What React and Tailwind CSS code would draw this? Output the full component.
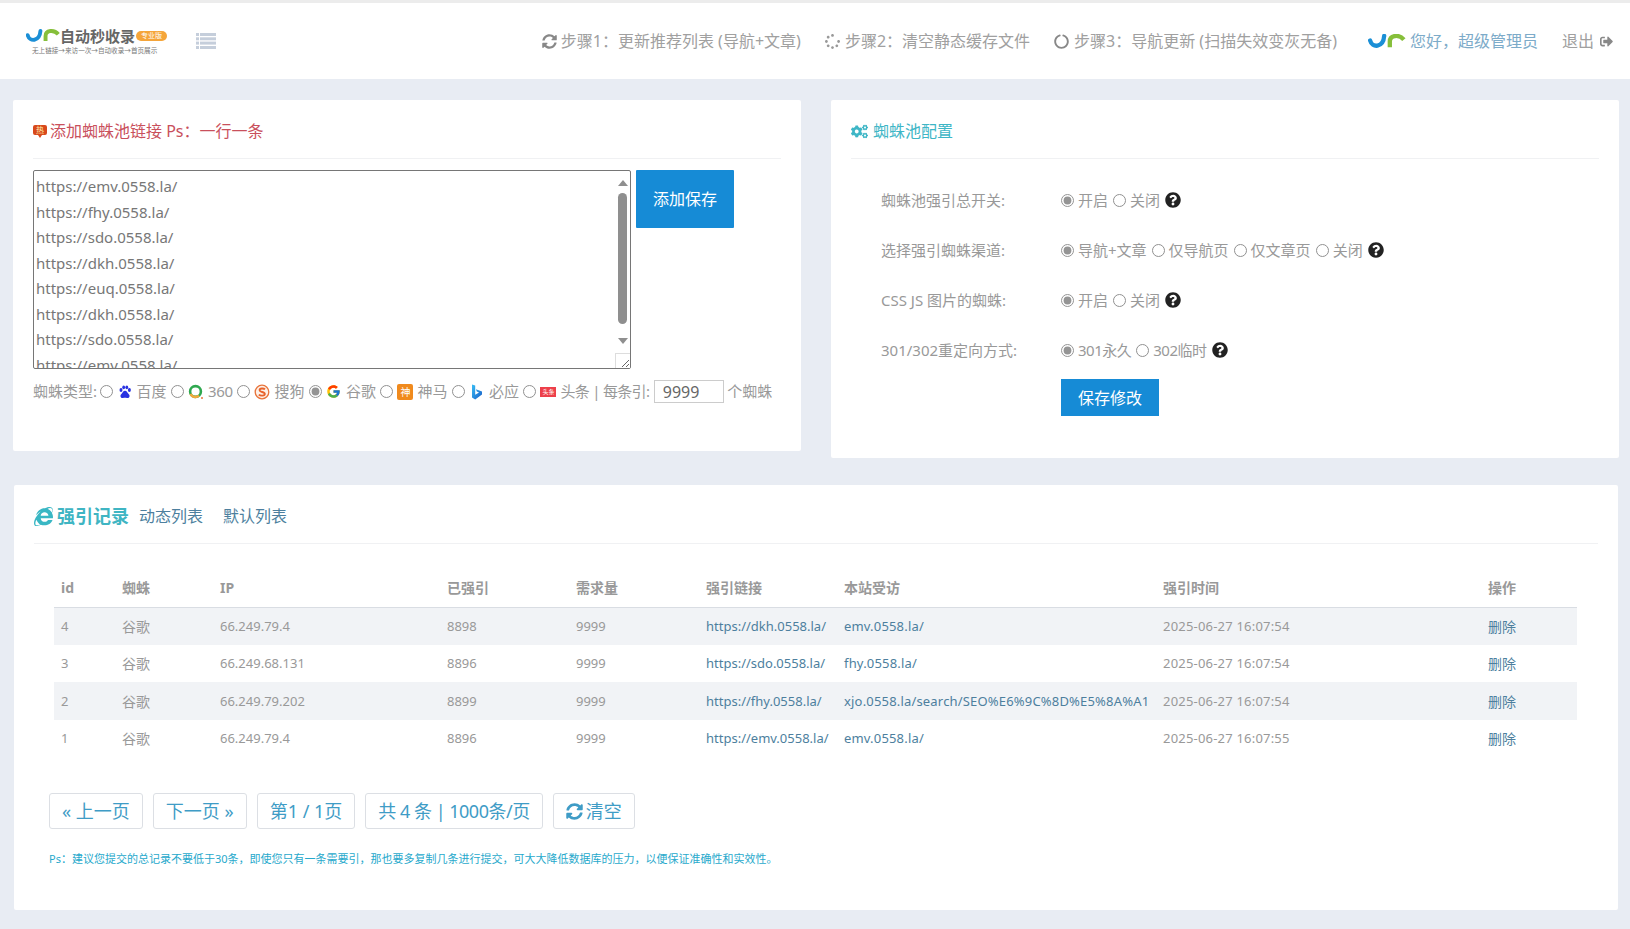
import {
  FaSyncAlt,
  FaSpinner,
  FaCircleNotch,
  FaSignOutAlt,
  FaQuestionCircle,
  FaCogs,
  FaInternetExplorer,
} from "react-icons/fa";
import { FcGoogle } from "react-icons/fc";

const LINKS = [
  "https://emv.0558.la/",
  "https://fhy.0558.la/",
  "https://sdo.0558.la/",
  "https://dkh.0558.la/",
  "https://euq.0558.la/",
  "https://dkh.0558.la/",
  "https://sdo.0558.la/",
  "https://emv.0558.la/",
];

const ROWS = [
  ["4", "66.249.79.4", "8898", "https://dkh.0558.la/", "emv.0558.la/", "2025-06-27 16:07:54"],
  ["3", "66.249.68.131", "8896", "https://sdo.0558.la/", "fhy.0558.la/", "2025-06-27 16:07:54"],
  ["2", "66.249.79.202", "8899", "https://fhy.0558.la/", "xjo.0558.la/search/SEO%E6%9C%8D%E5%8A%A1", "2025-06-27 16:07:54"],
  ["1", "66.249.79.4", "8896", "https://emv.0558.la/", "emv.0558.la/", "2025-06-27 16:07:55"],
];

const HEADS = ["id", "蜘蛛", "IP", "已强引", "需求量", "强引链接", "本站受访", "强引时间", "操作"];

const Logo = ({ className }) => (
  <svg viewBox="0 0 40 16" className={className}>
    <path d="M2 7 C4 15 16 15 17 2" fill="none" stroke="#1b8fd6" strokeWidth="4.6" strokeLinecap="round" />
    <path d="M23 14 V8 C23 1 33 0 38 6" fill="none" stroke="#86bf3a" strokeWidth="4.6" />
  </svg>
);

const Radio = ({ checked }) => (
  <input
    type="radio"
    defaultChecked={checked}
    className="m-0 h-[13px] w-[13px] shrink-0 accent-[#7a7a7a] opacity-80"
  />
);

const Help = () => <FaQuestionCircle className="h-[16px] w-[16px] shrink-0 text-[#222]" />;

const BaiduIcon = () => (
  <svg viewBox="0 0 14 14" className="h-[14px] w-[14px]">
    <g fill="#2932e1">
      <ellipse cx="3" cy="5" rx="1.5" ry="2" />
      <ellipse cx="5.7" cy="2.3" rx="1.4" ry="1.9" />
      <ellipse cx="8.8" cy="2.3" rx="1.4" ry="1.9" />
      <ellipse cx="11.4" cy="5" rx="1.5" ry="2" />
      <path d="M7 5.8 C5 5.8 4.8 8 3.2 9.2 C1.6 10.8 2.8 13.4 5 13 C6.4 12.6 7.6 12.6 9 13 C11.4 13.4 12.4 10.8 10.8 9.2 C9.2 8 9 5.8 7 5.8 Z" />
    </g>
  </svg>
);

const Q360Icon = () => (
  <svg viewBox="0 0 16 16" className="h-[16px] w-[16px]">
    <circle cx="7.5" cy="7.5" r="5.4" fill="none" stroke="#2fa84f" strokeWidth="2.6" />
    <path d="M2.5 10 A5.4 5.4 0 0 0 11 11.6" fill="none" stroke="#f2a93b" strokeWidth="2.6" />
    <circle cx="14" cy="14" r="1" fill="#e8743b" />
  </svg>
);

const SogouIcon = () => (
  <svg viewBox="0 0 16 16" className="h-[16px] w-[16px]">
    <circle cx="8" cy="8" r="6.8" fill="#fdf1e8" stroke="#e8743b" strokeWidth="1.3" />
    <path d="M11 5.4 C9.6 4 5.6 4.2 5.6 6.2 C5.6 8.4 10.8 7.6 10.8 10 C10.8 12 6.4 12 4.8 10.6" fill="none" stroke="#e8622b" strokeWidth="1.9" />
  </svg>
);

const ShenmaIcon = () => (
  <span className="flex h-[16px] w-[16px] items-center justify-center rounded-[2px] bg-[#f08a1d] text-[10px] leading-none text-white">
    神
  </span>
);

const BingIcon = () => (
  <svg viewBox="0 0 12 16" className="h-[16px] w-[12px]">
    <defs>
      <linearGradient id="bing" x1="0" y1="0" x2="1" y2="1">
        <stop offset="0" stopColor="#37bdf5" />
        <stop offset="1" stopColor="#1a5fc8" />
      </linearGradient>
    </defs>
    <path d="M1 0.5 L4.2 1.6 V10.8 L8 8.6 L5.8 7.6 L4.9 5.2 L11 7.4 V10.4 L4.2 15.5 L1 13.6 Z" fill="url(#bing)" />
  </svg>
);

const ToutiaoIcon = () => (
  <span className="flex h-[10px] w-[16px] items-center justify-center bg-[#ed3f4a] text-[6px] leading-none text-white">
    头条
  </span>
);

const SpiderOption = ({ icon, label, checked }) => (
  <span className="flex items-center">
    <Radio checked={checked} />
    <span className="ml-[4px] flex w-[16px] justify-center">{icon}</span>
    <span className="ml-[4px]">{label}</span>
  </span>
);

const ConfigOption = ({ label, checked, tight }) => (
  <span className="flex items-center gap-[4px]">
    <Radio checked={checked} />
    <span className={tight ? "tracking-[-0.5px]" : ""}>{label}</span>
  </span>
);

const ConfigRow = ({ label, options, tight }) => (
  <div className="flex h-[50px] items-center text-[15px] text-[#999]">
    <div className="w-[210px] pl-[30px]">{label}</div>
    <div className="flex items-center gap-[5px]">
      {options.map((o, i) => (
        <ConfigOption key={o} label={o} checked={i === 0} tight={tight} />
      ))}
      <Help />
    </div>
  </div>
);

const PageButton = ({ children }) => (
  <span className="flex h-[36px] items-center rounded-[3px] border border-[#dcdfe4] px-[12px] text-[18px] text-[#3f9cc6]">
    {children}
  </span>
);

const App = () => {
  return (
    <div className="min-h-[929px] bg-[#e8ecf3] font-['Noto_Sans','Noto_Sans_CJK_SC',sans-serif]">
      <header className="flex h-[79px] items-center border-t-[3px] border-[#ececec] bg-white pl-[26px] pr-[17px]">
        <div className="flex w-[140px] flex-col">
          <div className="flex items-center whitespace-nowrap">
            <Logo className="h-[16px] w-[34px] shrink-0" />
            <span className="text-[15px] font-bold leading-[18px] text-[#666]">自动秒收录</span>
            <span className="ml-[1px] rounded-full bg-[#f5a53a] px-[5px] text-[7px] leading-[10px] text-white">专业版</span>
          </div>
          <div className="ml-[6px] mt-[2px] whitespace-nowrap text-[6.6px] leading-[8px] text-[#777]">
            无上链接→来访一次→自动收录→首页展示
          </div>
        </div>
        <svg viewBox="0 0 20 16" className="ml-[30px] h-[16px] w-[20px]" fill="#c5cedb">
          <rect x="0" y="0" width="3" height="3" />
          <rect x="4" y="0" width="16" height="3" />
          <rect x="0" y="4.3" width="3" height="3" />
          <rect x="4" y="4.3" width="16" height="3" />
          <rect x="0" y="8.6" width="3" height="3" />
          <rect x="4" y="8.6" width="16" height="3" />
          <rect x="0" y="13" width="3" height="3" />
          <rect x="4" y="13" width="16" height="3" />
        </svg>
        <nav className="ml-auto flex items-center text-[16px] text-[#a0a0a0]">
          <span className="flex items-center gap-[4px]">
            <FaSyncAlt className="h-[15px] w-[15px] text-[#888]" />
            步骤1：更新推荐列表 (导航+文章)
          </span>
          <span className="ml-[24px] flex items-center gap-[5px]">
            <FaSpinner className="h-[15px] w-[15px] text-[#999]" />
            步骤2：清空静态缓存文件
          </span>
          <span className="ml-[24px] flex items-center gap-[5px]">
            <FaCircleNotch className="h-[15px] w-[15px] text-[#888]" />
            步骤3：导航更新 (扫描失效变灰无备)
          </span>
          <span className="ml-[31px] flex items-center gap-[4px] text-[#7dabc9]">
            <Logo className="h-[15px] w-[38px]" />
            您好，超级管理员
          </span>
          <span className="ml-[24px] flex items-center gap-[6px]">
            退出
            <FaSignOutAlt className="h-[13px] w-[13px] text-[#888]" />
          </span>
        </nav>
      </header>

      <div className="flex items-start gap-[30px] pl-[13px] pr-[11px] pt-[21px]">
        <section className="h-[351px] w-[788px] rounded-[2px] bg-white px-[20px]">
          <div className="flex h-[59px] items-center gap-[3px] border-b border-[#f0f1f3] pt-[4px] text-[16px] text-[#c9505c]">
            <svg viewBox="0 0 14 14" className="h-[14px] w-[14px]">
              <path d="M2 1 H12 A2 2 0 0 1 14 3 V9 A2 2 0 0 1 12 11 H9 L7 14 L5 11 H2 A2 2 0 0 1 0 9 V3 A2 2 0 0 1 2 1 Z" fill="#d8491c" />
              <text x="7" y="9" textAnchor="middle" fontSize="8" fill="#ffe9a8">热</text>
            </svg>
            添加蜘蛛池链接 Ps：一行一条
          </div>
          <div className="mt-[11px] flex items-start gap-[5px]">
            <div className="relative h-[199px] w-[598px]">
              <textarea
                readOnly
                defaultValue={LINKS.join("\n")}
                className="block h-full w-full resize-none overflow-hidden rounded-[2px] border border-[#767676] px-[2px] pt-[3px] text-[15px] leading-[25.5px] text-[#777] outline-none"
              />
              <div className="absolute right-[4px] top-[23px] h-[131px] w-[9px] rounded-full bg-[#8f8f8f]" />
              <svg viewBox="0 0 10 6" className="absolute right-[3px] top-[10px] h-[6px] w-[10px]" fill="#8f8f8f">
                <path d="M5 0 L10 6 H0 Z" />
              </svg>
              <svg viewBox="0 0 10 6" className="absolute right-[3px] top-[168px] h-[6px] w-[10px]" fill="#8f8f8f">
                <path d="M0 0 H10 L5 6 Z" />
              </svg>
              <svg viewBox="0 0 15 15" className="absolute bottom-[1px] right-[1px] h-[15px] w-[15px]">
                <rect x="0.5" y="0.5" width="15" height="15" fill="#fff" stroke="#ddd" />
                <path d="M7 14 L14 7 M11 14 L14 11" stroke="#666" strokeWidth="1" />
              </svg>
            </div>
            <button className="h-[58px] w-[98px] rounded-[1px] bg-[#168bd6] text-[16px] text-white">添加保存</button>
          </div>
          <div className="mt-[11px] flex items-center gap-[4.5px] whitespace-nowrap text-[15px] text-[#999]">
            <span className="mr-[-2px]">蜘蛛类型:</span>
            <SpiderOption icon={<BaiduIcon />} label="百度" />
            <SpiderOption icon={<Q360Icon />} label={<span className="tracking-[-0.3px]">360</span>} />
            <SpiderOption icon={<SogouIcon />} label="搜狗" />
            <SpiderOption icon={<FcGoogle className="h-[15px] w-[15px]" />} label="谷歌" checked />
            <SpiderOption icon={<ShenmaIcon />} label="神马" />
            <SpiderOption icon={<BingIcon />} label="必应" />
            <SpiderOption
              icon={<ToutiaoIcon />}
              label={<span className="tracking-[-0.7px]">头条 | 每条引:</span>}
            />
            <input
              readOnly
              defaultValue="9999"
              className="h-[23px] w-[70px] border border-[#ccc] px-[8px] text-[16px] text-[#666] outline-none"
            />
            <span className="ml-[-1px]">个蜘蛛</span>
          </div>
        </section>

        <section className="h-[358px] w-[788px] rounded-[2px] bg-white px-[20px]">
          <div className="flex h-[59px] items-center gap-[5px] border-b border-[#f0f1f3] pt-[4px] text-[16px] text-[#3eb6c6]">
            <FaCogs className="h-[17px] w-[17px]" />
            蜘蛛池配置
          </div>
          <div className="pt-[16px]">
            <ConfigRow label="蜘蛛池强引总开关:" options={["开启", "关闭"]} />
            <ConfigRow label="选择强引蜘蛛渠道:" options={["导航+文章", "仅导航页", "仅文章页", "关闭"]} />
            <ConfigRow label="CSS JS 图片的蜘蛛:" options={["开启", "关闭"]} />
            <ConfigRow label="301/302重定向方式:" options={["301永久", "302临时"]} tight />
          </div>
          <button className="ml-[210px] mt-[4px] h-[37px] w-[98px] bg-[#168bd6] text-[16px] text-white">保存修改</button>
        </section>
      </div>

      <section className="ml-[14px] mr-[12px] mt-[27px] h-[425px] rounded-[2px] bg-white px-[20px]">
        <div className="flex h-[59px] items-center border-b border-[#f0f1f3] pt-[4px]">
          <FaInternetExplorer className="h-[19px] w-[19px] text-[#39b7c4]" />
          <span className="ml-[4px] text-[18px] font-bold text-[#3fb5c3]">强引记录</span>
          <span className="ml-[10px] text-[16px] text-[#4d7f9e]">动态列表</span>
          <span className="ml-[20px] text-[16px] text-[#4d7f9e]">默认列表</span>
        </div>
        <div className="pl-[20px] pr-[21px] pt-[26px]">
          <table className="w-[1523px] table-fixed border-collapse text-[14px] text-[#999]">
            <colgroup>
              <col className="w-[61px]" />
              <col className="w-[98px]" />
              <col className="w-[227px]" />
              <col className="w-[129px]" />
              <col className="w-[130px]" />
              <col className="w-[138px]" />
              <col className="w-[319px]" />
              <col className="w-[325px]" />
              <col className="w-[96px]" />
            </colgroup>
            <thead>
              <tr className="h-[37px] border-b border-[#d9dde3]">
                {HEADS.map((h) => (
                  <th key={h} className="pb-[2px] pl-[7px] text-left font-bold text-[#999]">{h}</th>
                ))}
              </tr>
            </thead>
            <tbody>
              {ROWS.map((r, i) => (
                <tr key={r[0]} className={i % 2 === 0 ? "h-[38px] bg-[#f1f3f6]" : "h-[37px]"}>
                  <td className="pl-[7px] pt-[1px] text-[13px]">{r[0]}</td>
                  <td className="pl-[7px]">谷歌</td>
                  <td className="pl-[7px] pt-[1px] text-[13px]">{r[1]}</td>
                  <td className="pl-[7px] pt-[1px] text-[13px]">{r[2]}</td>
                  <td className="pl-[7px] pt-[1px] text-[13px]">9999</td>
                  <td className="whitespace-nowrap pl-[7px] pt-[1px] text-[13px] text-[#4d7f9e]">{r[3]}</td>
                  <td className="whitespace-nowrap pl-[7px] pt-[1px] text-[13px] tracking-[0.18px] text-[#4d7f9e]">{r[4]}</td>
                  <td className="pl-[7px] pt-[1px] text-[13px] tracking-[0.2px]">{r[5]}</td>
                  <td className="pl-[7px] text-[#4d7f9e]">删除</td>
                </tr>
              ))}
            </tbody>
          </table>
        </div>
        <div className="ml-[15px] mt-[36px] flex gap-[10px]">
          <PageButton>« 上一页</PageButton>
          <PageButton>下一页 »</PageButton>
          <PageButton>第1 / 1页</PageButton>
          <PageButton>
            <span className="tracking-[-0.5px]">共 4 条 | 1000条/页</span>
          </PageButton>
          <PageButton>
            <FaSyncAlt className="mr-[3px] h-[17px] w-[17px]" />
            清空
          </PageButton>
        </div>
        <p className="ml-[15px] mt-[22px] text-[11px] leading-[16px] text-[#27a9cc]">
          Ps：建议您提交的总记录不要低于30条，即使您只有一条需要引，那也要多复制几条进行提交，可大大降低数据库的压力，以便保证准确性和实效性。
        </p>
      </section>
    </div>
  );
};

export default App;
